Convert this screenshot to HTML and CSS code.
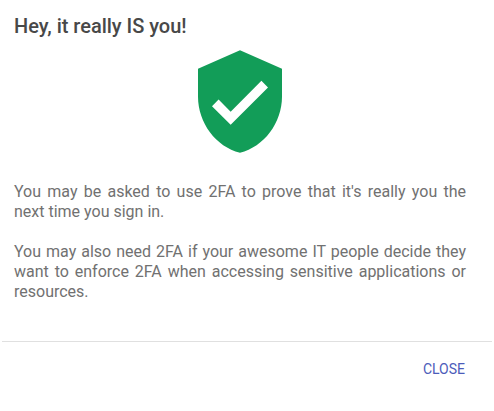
FILE: index.html
```html
<!DOCTYPE html>
<html lang="en">
<head>
<meta charset="utf-8">
<title>Two-factor authentication</title>
<link rel="stylesheet" href="styles.css">
</head>
<body>
<main class="dialog">
  <section class="content">
    <h1 class="title">Hey, it really IS you!</h1>
    <svg class="shield" viewBox="3 1 18 22" aria-hidden="true"><path d="M12 1L3 5v6c0 5.550 3.840 10.740 9 12 5.160-1.260 9-6.450 9-12V5l-9-4zm-2 16l-4-4 1.410-1.410L10 14.170l6.590-6.590L18 9l-8 8z"/></svg>
    <p class="text">You may be asked to use 2FA to prove that it's really you the next time you sign in.</p>
    <p class="text">You may also need 2FA if your awesome IT people decide they want to enforce 2FA when accessing sensitive applications or resources.</p>
  </section>
  <footer class="actions"><button class="close" type="button">CLOSE</button></footer>
</main>
</body>
</html>
```
FILE: styles.css
```css
body {
  margin: 0;
  background: #fff;
  font-family: Roboto, sans-serif;
}

.dialog {
  height: 411px;
  display: flex;
  flex-direction: column;
}

.content {
  box-sizing: border-box;
  height: 341px;
  padding: 14px 28px 0 14px;
}

.title {
  margin: 0;
  font-size: 20px;
  line-height: 24px;
  font-weight: 500;
  letter-spacing: -0.02px;
  color: #484848;
}

.shield {
  display: block;
  width: 84px;
  height: 103px;
  margin: 11.5px auto 29.5px 184px;
  fill: #129d58;
}

.text {
  margin: 0 0 20px;
  font-size: 16px;
  line-height: 20px;
  text-align: justify;
  color: #717171;
}

.actions {
  display: flex;
  justify-content: flex-end;
  margin: 0 2px;
  padding: 15px 19px;
  border-top: 1px solid #e0e0e0;
}

.close {
  border: 0;
  padding: 0 8px;
  background: none;
  font: 14px/24px Roboto, sans-serif;
  color: #4c5cba;
}
```
